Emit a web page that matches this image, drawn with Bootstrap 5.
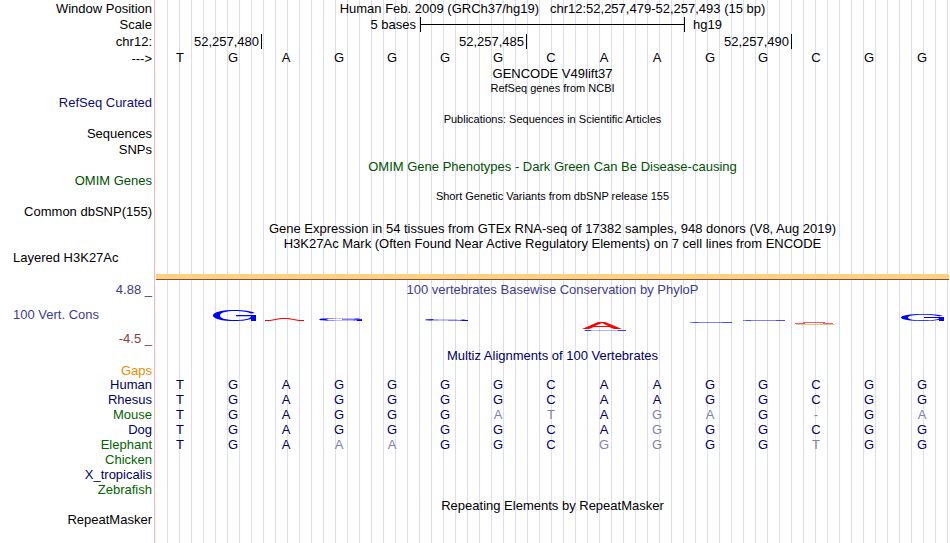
<!DOCTYPE html>
<html lang="en">
  <head>
    <meta charset="UTF-8" />
    <meta name="viewport" content="width=device-width, initial-scale=1.0" />
    <title>Genome Browser - chr12:52,257,479-52,257,493</title>
    <link
      href="https://cdn.jsdelivr.net/npm/bootstrap@5.3.3/dist/css/bootstrap.min.css"
      rel="stylesheet"
    />
    <style>
      body {
        font-family: "Liberation Sans", Arial, sans-serif;
        font-size: 13px;
        line-height: 15px;
        color: #000;
      }
      /* pink divider after the labels, then a guide line every 12px */
      .browser {
        background:
          linear-gradient(to right, #fff 154px, #ffb4b4 154px 155px, #fff 155px 156px, transparent 156px),
          repeating-linear-gradient(to right, transparent 0 11px, #dcdcf8 11px 12px);
      }
      .track { display: flex; align-items: center; height: 15px; }
      .track.tall { height: 16px; }
      .track.ruler { height: 17px; }
      .track.short { height: 14px; }
      .side { flex: 0 0 155px; padding-right: 3px; text-align: right; white-space: nowrap; }
      .side.indent { padding-left: 13px; text-align: left; }
      .side.raised { padding-bottom: 2px; }
      .plot { flex: 1 1 0; min-width: 0; text-align: center; white-space: nowrap; }
      .fine { font-size: 11px; }

      /* one column per base */
      .bases { display: grid; grid-template-columns: repeat(15, minmax(0, 1fr)); }
      .bases > span { padding-right: 3px; }
      .letters { padding-bottom: 2px; }
      .span-2 { grid-column: span 2; }
      .span-3 { grid-column: span 3; }
      .span-5 { grid-column: span 5; }
      .scale-bar { height: 15px; border: solid #000; border-width: 0 1px; }
      .scale-bar hr { margin: 7px 0; border-top: 1px solid #000; opacity: 1; }
      .coord { height: 15px; padding-right: 2px; }
      .tick { border-left: 1px solid #000; }

      .signal { height: 6px; margin: 8px 1px 0 156px; background: #ffd080; border-bottom: 1px solid #80503c; }
      .cons { color: #3c3c8c; }
      .cons-side { padding-top: 2px; padding-bottom: 2px; }
      .cons-name { padding-left: 13px; text-align: left; }
      .cons-plot { padding-top: 2px; }
      .cons-plot svg { height: 51px; }
      .low { color: #8c3c3c; }

      .navy { color: #0c0c78; }
      .multiz { color: #000064; }
      .omim { color: #005000; }
      .gaps { color: #eb8c00; }

      .align { table-layout: fixed; color: #000064; }
      .align th { width: 155px; padding: 0 3px 0 0; text-align: right; font-weight: 400; }
      .align td { height: 15px; padding: 0 3px 0 0; text-align: center; }
      .align .green { color: #006400; }
      .align .diff { color: #8080b0; }
    </style>
  </head>

  <body>
    <main class="browser min-vh-100">
      <div class="track ruler">
        <div class="side">Window Position</div>
        <div class="plot">Human Feb. 2009 (GRCh37/hg19) &nbsp; chr12:52,257,479-52,257,493 (15 bp)</div>
      </div>
      <div class="track tall align-items-start">
        <div class="side">Scale</div>
        <div class="plot bases">
          <div class="span-5 text-end pe-1">5 bases</div>
          <div class="span-5 scale-bar"><hr /></div>
          <div class="span-5 text-start ps-2">hg19</div>
        </div>
      </div>
      <div class="track ruler">
        <div class="side">chr12:</div>
        <div class="plot bases text-end">
          <div class="span-2 coord">52,257,480</div>
          <div class="span-5 coord tick">52,257,485</div>
          <div class="span-5 coord tick">52,257,490</div>
          <div class="span-3 coord tick"></div>
        </div>
      </div>
      <div class="track tall">
        <div class="side">---&gt;</div>
        <div class="plot bases letters">
          <span>T</span>
          <span>G</span>
          <span>A</span>
          <span>G</span>
          <span>G</span>
          <span>G</span>
          <span>G</span>
          <span>C</span>
          <span>A</span>
          <span>A</span>
          <span>G</span>
          <span>G</span>
          <span>C</span>
          <span>G</span>
          <span>G</span>
        </div>
      </div>

      <!-- genes -->
      <div class="track">
        <div class="side"></div>
        <div class="plot">GENCODE V49lift37</div>
      </div>
      <div class="track">
        <div class="side"></div>
        <div class="plot fine">RefSeq genes from NCBI</div>
      </div>
      <div class="track">
        <div class="side raised navy">RefSeq Curated</div>
      </div>

      <!-- publications -->
      <div class="track tall">
        <div class="side"></div>
        <div class="plot fine">Publications: Sequences in Scientific Articles</div>
      </div>
      <div class="track">
        <div class="side raised">Sequences</div>
      </div>
      <div class="track tall">
        <div class="side raised">SNPs</div>
      </div>

      <!-- variants -->
      <div class="track tall omim">
        <div class="side"></div>
        <div class="plot">OMIM Gene Phenotypes - Dark Green Can Be Disease-causing</div>
      </div>
      <div class="track omim">
        <div class="side raised">OMIM Genes</div>
      </div>
      <div class="track">
        <div class="side"></div>
        <div class="plot fine">Short Genetic Variants from dbSNP release 155</div>
      </div>
      <div class="track tall">
        <div class="side raised">Common dbSNP(155)</div>
      </div>

      <!-- expression and regulation -->
      <div class="track tall">
        <div class="side"></div>
        <div class="plot">Gene Expression in 54 tissues from GTEx RNA-seq of 17382 samples, 948 donors (V8, Aug 2019)</div>
      </div>
      <div class="track">
        <div class="side"></div>
        <div class="plot">H3K27Ac Mark (Often Found Near Active Regulatory Elements) on 7 cell lines from ENCODE</div>
      </div>
      <div class="track">
        <div class="side raised indent">Layered H3K27Ac</div>
      </div>
      <div class="signal"></div>

      <!-- conservation -->
      <div class="d-flex cons">
        <div class="side cons-side d-flex flex-column justify-content-between">
          <div>4.88 _</div>
          <div class="cons-name">100 Vert. Cons</div>
          <div class="low">-4.5 _</div>
        </div>
        <div class="plot cons-plot">
          <div>100 vertebrates Basewise Conservation by PhyloP</div>
          <svg class="d-block w-100" viewBox="155 297 795 51" preserveAspectRatio="none" aria-hidden="true">
            <symbol id="peak" viewBox="0 0 43 11" preserveAspectRatio="none">
              <path fill="#00f" d="M42 3C38 1 31 0 22 0C9 0 0 2 0 5.500C0 9 9 11 22 11C29 11 35 10 38 9V11H43V5H23V6.200H38C38 8.500 31 10 23 10C13 10 7 8.500 7 5.500C7 2.500 13 1 22 1C30 1 35 2 38 3.500Z" />
            </symbol>
            <use href="#peak" x="213" y="310" width="43" height="11" />
            <path fill="none" stroke="#f00" stroke-width="1.200" d="M265 320.500H270L281 318.500H288L299 320.500H304" />
            <use href="#peak" x="319" y="318" width="43" height="3" />
            <path stroke="#00f" stroke-opacity=".4" d="M321 319.500H328M354 319.500H362" />
            <use href="#peak" x="425" y="319" width="43" height="2" />
            <path stroke="#00f" stroke-opacity=".4" d="M426 319.500H434M460 320.500H468" />
            <path stroke="#00f" stroke-opacity=".3" d="M584 330.500H626" />
            <path stroke="#00f" stroke-opacity=".7" d="M585 330.500H591M618 330.500H626" />
            <path fill="#f00" fill-rule="evenodd" d="M582 329L598 322H605L622 329H614L609 327H594L589 329ZM595 326H608L602 323Z" />
            <path stroke="#00f" stroke-opacity=".5" d="M690 322.500H732M743 320.500H785" />
            <path stroke="#00f" stroke-opacity=".4" d="M693 322.500H698M722 322.500H732M746 320.500H751M776 320.500H785" />
            <path stroke="#f00" stroke-opacity=".65" d="M803 322.500H825M795 323.500H805M823 323.500H833" />
            <path stroke="#a0a000" stroke-opacity=".5" d="M796 324.500H834" />
            <use href="#peak" x="901" y="314" width="43" height="7" />
            <path stroke="#00f" d="M924 317.500H944" />
          </svg>
        </div>
      </div>
      <div class="track">
        <div class="side"></div>
        <div class="plot multiz">Multiz Alignments of 100 Vertebrates</div>
      </div>
      <div class="track short">
        <div class="side gaps">Gaps</div>
      </div>
      <table class="align w-100">
        <tbody>
          <tr>
            <th scope="row">Human</th>
            <td>T</td><td>G</td><td>A</td><td>G</td><td>G</td>
            <td>G</td><td>G</td><td>C</td><td>A</td><td>A</td>
            <td>G</td><td>G</td><td>C</td><td>G</td><td>G</td>
          </tr>
          <tr>
            <th scope="row">Rhesus</th>
            <td>T</td><td>G</td><td>A</td><td>G</td><td>G</td>
            <td>G</td><td>G</td><td>C</td><td>A</td><td>A</td>
            <td>G</td><td>G</td><td>C</td><td>G</td><td>G</td>
          </tr>
          <tr>
            <th scope="row" class="green">Mouse</th>
            <td>T</td><td>G</td><td>A</td><td>G</td><td>G</td>
            <td>G</td><td class="diff">A</td><td class="diff">T</td><td>A</td><td class="diff">G</td>
            <td class="diff">A</td><td>G</td><td class="diff">-</td><td>G</td><td class="diff">A</td>
          </tr>
          <tr>
            <th scope="row">Dog</th>
            <td>T</td><td>G</td><td>A</td><td>G</td><td>G</td>
            <td>G</td><td>G</td><td>C</td><td>A</td><td class="diff">G</td>
            <td>G</td><td>G</td><td>C</td><td>G</td><td>G</td>
          </tr>
          <tr>
            <th scope="row" class="green">Elephant</th>
            <td>T</td><td>G</td><td>A</td><td class="diff">A</td><td class="diff">A</td>
            <td>G</td><td>G</td><td>C</td><td class="diff">G</td><td class="diff">G</td>
            <td>G</td><td>G</td><td class="diff">T</td><td>G</td><td>G</td>
          </tr>
          <tr>
            <th scope="row" class="green">Chicken</th>
            <td colspan="15"></td>
          </tr>
          <tr>
            <th scope="row">X_tropicalis</th>
            <td colspan="15"></td>
          </tr>
          <tr>
            <th scope="row" class="green">Zebrafish</th>
            <td colspan="15"></td>
          </tr>
        </tbody>
      </table>

      <!-- repeats -->
      <div class="track tall">
        <div class="side"></div>
        <div class="plot">Repeating Elements by RepeatMasker</div>
      </div>
      <div class="track">
        <div class="side raised">RepeatMasker</div>
      </div>
    </main>
    <script src="https://cdn.jsdelivr.net/npm/bootstrap@5.3.3/dist/js/bootstrap.bundle.min.js"></script>
  </body>
</html>
